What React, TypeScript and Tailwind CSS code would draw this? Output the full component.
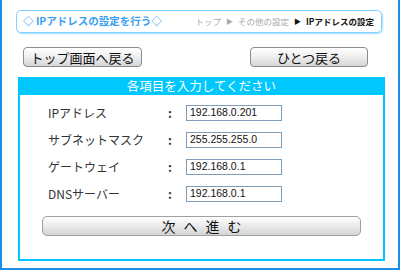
import React from "react";

const rows = [
  { label: "IPアドレス", value: "192.168.0.201" },
  { label: "サブネットマスク", value: "255.255.255.0" },
  { label: "ゲートウェイ", value: "192.168.0.1" },
  { label: "DNSサーバー", value: "192.168.0.1" },
];

const jp = "font-['Noto_Sans_CJK_JP',_sans-serif]";

export default function App() {
  return (
    <div
      className={`${jp} w-[400px] h-[270px] bg-white border-x-2 border-b-2 border-[#1b8fe6] pt-[10px] flex flex-col`}
    >
      {/* タイトル + パンくず */}
      <div className="ml-[14px] w-[366px] h-[23px] rounded-[5px] border border-[#7fd4ff] shadow-[1px_1px_2px_rgba(0,160,255,0.35)] flex items-center justify-between pl-[6px] pr-[7px]">
        <span className="text-[10.5px] font-bold text-[#3aa0f0] leading-none">
          ◇ IPアドレスの設定を行う◇
        </span>
        <span className="text-[8.5px] leading-none text-[#aaaaaa] flex items-center gap-[5px]">
          <span>トップ</span>
          <span className="text-[7px]">▶</span>
          <span>その他の設定</span>
          <span className="text-[7px] text-[#111]">▶</span>
          <span className="text-[#111] font-bold">IPアドレスの設定</span>
        </span>
      </div>

      {/* 戻るボタン */}
      <div className="mt-[14px] flex justify-between pl-[21px] pr-[30px]">
        <button
          type="button"
          className="w-[119px] h-[20px] rounded-[4px] border border-[#8c8c8c] bg-[linear-gradient(#ffffff,#f0f0f0_45%,#d6d6d6)] text-[13px] leading-none text-[#111] flex items-center justify-center"
        >
          トップ画面へ戻る
        </button>
        <button
          type="button"
          className="w-[118px] h-[20px] rounded-[4px] border border-[#8c8c8c] bg-[linear-gradient(#ffffff,#f0f0f0_45%,#d6d6d6)] text-[13px] leading-none text-[#111] flex items-center justify-center"
        >
          ひとつ戻る
        </button>
      </div>

      {/* 入力パネル */}
      <div className="mt-[10px] ml-[16px] w-[367px] h-[184px] flex flex-col">
        <div className="h-[18px] bg-[#00c8ff] text-white text-[12.5px] leading-none flex items-center justify-center">
          各項目を入力してください
        </div>
        <div className="flex-1 border-x-2 border-b-2 border-[#00c8ff] pt-[4px]">
          {rows.map((r) => (
            <div key={r.label} className="h-[27px] flex items-center text-[12px] text-[#333]">
              <span className="pl-[28px] w-[148px]">{r.label}</span>
              <span className="w-[18px] font-bold">:</span>
              <div className="w-[96px] h-[16px] border border-[#7f9db9] bg-white flex items-center pl-[3px] text-[10.5px] text-[#111] font-['Liberation_Sans',_sans-serif]">
                {r.value}
              </div>
            </div>
          ))}
          <button
            type="button"
            className="mt-[9px] ml-[22px] w-[319px] h-[20px] rounded-[5px] border border-[#a0a0a0] bg-[linear-gradient(#ffffff,#eeeeee_40%,#d4d4d4)] text-[14px] leading-none text-[#111] flex items-center justify-center gap-[8px]"
          >
            <span>次</span>
            <span>へ</span>
            <span>進</span>
            <span>む</span>
          </button>
        </div>
      </div>
    </div>
  );
}
